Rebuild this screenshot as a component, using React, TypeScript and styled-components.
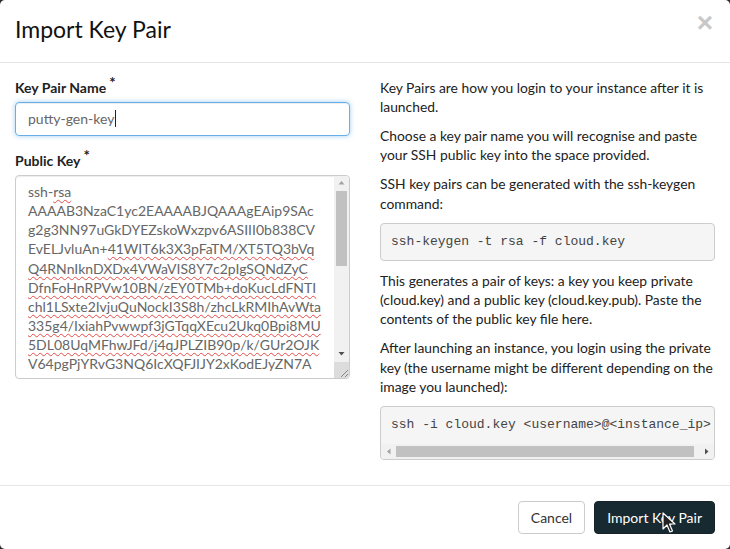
import React from "react";
import styled, { createGlobalStyle } from "styled-components";

const Global = createGlobalStyle`
  html, body { margin: 0; padding: 0; background: #2b2b2b; }
  body { font-family: Lato, "Open Sans", sans-serif; color: #333; }
  * { box-sizing: border-box; }
`;

const Modal = styled.div`
  position: relative;
  width: 730px;
  height: 549px;
  background: #fff;
  border-radius: 5px;
  display: flex;
  flex-direction: column;
  overflow: hidden;
`;

const Header = styled.div`
  display: flex;
  align-items: center;
  justify-content: space-between;
  height: 63px;
  padding: 0 15px 3px 15px;
  border-bottom: 1px solid #e5e5e5;
`;

const Title = styled.h4`
  margin: 0;
  font-size: 23px;
  font-weight: 400;
  color: #111;
  line-height: 1;
`;

const Close = styled.button`
  border: 0;
  background: none;
  padding: 0;
  margin-top: -12px;
  margin-right: 2px;
  font-family: "Liberation Sans", sans-serif;
  font-size: 28px;
  font-weight: 700;
  color: #c8c8c8;
  line-height: 1;
`;

const Body = styled.div`
  flex: 1;
  display: grid;
  grid-template-columns: 335px 335px;
  column-gap: 30px;
  padding: 15px;
  align-items: start;
`;

const Column = styled.div`
  display: flex;
  flex-direction: column;
`;

const Group = styled.div`
  display: flex;
  flex-direction: column;
  margin-bottom: 15px;
`;

const Label = styled.label`
  font-size: 14px;
  font-weight: 700;
  color: #222;
  line-height: 19.2px;
  margin-bottom: 5px;
`;

const Req = styled.span`
  font-size: 15px;
  line-height: 0;
  margin-left: 3px;
  position: relative;
  top: -5px;
`;

const TextInput = styled.div`
  height: 34px;
  border: 1px solid #66afe9;
  border-radius: 4px;
  box-shadow: inset 0 1px 1px rgba(0,0,0,.075), 0 0 5px rgba(102,175,233,.6);
  padding: 0 12px;
  display: flex;
  align-items: center;
  font-size: 14px;
  color: #666;
`;

const Caret = styled.span`
  display: inline-block;
  width: 1px;
  height: 17px;
  background: #222;
  margin-left: 1px;
`;

const KeyArea = styled.div`
  height: 204px;
  border: 1px solid #ccc;
  border-radius: 4px;
  display: flex;
  overflow: hidden;
  box-shadow: inset 0 1px 1px rgba(0,0,0,.075);
`;

const KeyText = styled.div`
  flex: 1;
  padding: 6px 0 0 12px;
  font-size: 14px;
  line-height: 19.15px;
  color: #666;
  overflow: hidden;
`;

const KeyLine = styled.div`
  white-space: nowrap;
`;

const Misspelled = styled.span`
  text-decoration: underline wavy #e34a46;
  text-decoration-thickness: 1px;
  text-underline-offset: 2px;
  text-decoration-skip-ink: none;
`;

const VScroll = styled.div`
  width: 15px;
  display: flex;
  flex-direction: column;
  background: #f1f1f1;
`;

const HScroll = styled.div`
  height: 15px;
  display: flex;
  background: #f1f1f1;
`;

const ScrollButton = styled.div`
  width: 15px;
  height: 15px;
  flex: none;
  display: flex;
  align-items: center;
  justify-content: center;
`;

const VTrack = styled.div`
  flex: 1;
  display: flex;
  flex-direction: column;
  padding: 0 2px;
`;

const HTrack = styled.div`
  flex: 1;
  display: flex;
  align-items: center;
`;

const Thumb = styled.div<{ $vertical?: boolean }>`
  background: #c1c1c1;
  ${(p) => (p.$vertical ? "width: 100%;" : "height: 11px;")}
`;

const Corner = styled.div`
  width: 15px;
  height: 16px;
  flex: none;
  background: #dcdcdc;
  display: flex;
  align-items: flex-end;
  justify-content: flex-end;
`;

const Para = styled.p`
  margin: 0 0 10px;
  font-size: 13.85px;
  line-height: 19.2px;
  color: #222;
`;

const Code = styled.pre`
  margin: 0 0 10px;
  padding: 9px 10px;
  background: #f5f5f5;
  border: 1px solid #ccc;
  border-radius: 4px;
  font-family: "Liberation Mono", monospace;
  font-size: 13px;
  line-height: 18px;
  color: #444;
  overflow: hidden;
  white-space: pre;
`;

const ScrollBox = styled.div`
  margin: 0 0 10px;
  background: #f5f5f5;
  border: 1px solid #ccc;
  border-radius: 4px;
  overflow: hidden;
  display: flex;
  flex-direction: column;
`;

const CodeInner = styled.pre`
  margin: 0;
  padding: 9px 10px 10px;
  font-family: "Liberation Mono", monospace;
  font-size: 13px;
  line-height: 18px;
  color: #444;
  overflow: hidden;
  white-space: pre;
`;

const Footer = styled.div`
  display: flex;
  justify-content: flex-end;
  gap: 9px;
  padding: 15px;
  border-top: 1px solid #e5e5e5;
`;

const Button = styled.button<{ $primary?: boolean }>`
  height: 33px;
  padding: 0 12px;
  border-radius: 4px;
  font-family: Lato, sans-serif;
  font-size: 14px;
  line-height: 1;
  border: 1px solid ${(p) => (p.$primary ? "#162329" : "#ccc")};
  background: ${(p) => (p.$primary ? "#182a31" : "#fff")};
  color: ${(p) => (p.$primary ? "#fff" : "#333")};
`;

const Pointer = styled.svg`
  position: absolute;
  left: 662px;
  top: 512px;
`;

const Arrow = ({ dir, color }: { dir: "up" | "down" | "left" | "right"; color: string }) => {
  const pts = {
    up: "0.5,4.5 3.5,1 6.5,4.5",
    down: "0.5,1 3.5,4.5 6.5,1",
    left: "4.5,0.5 1,3.5 4.5,6.5",
    right: "1,0.5 4.5,3.5 1,6.5",
  }[dir];
  const vertical = dir === "up" || dir === "down";
  return (
    <svg width={vertical ? 7 : 6} height={vertical ? 6 : 7} viewBox={vertical ? "0 0 7 6" : "0 0 6 7"}>
      <polygon points={pts} fill={color} />
    </svg>
  );
};

export default function App() {
  return (
    <>
      <Global />
      <Modal>
        <Header>
          <Title>Import Key Pair</Title>
          <Close aria-label="Close">×</Close>
        </Header>
        <Body>
          <Column>
            <Group>
              <Label>
                Key Pair Name<Req>*</Req>
              </Label>
              <TextInput>
                putty-gen-key
                <Caret />
              </TextInput>
            </Group>
            <Group>
              <Label>
                Public Key<Req>*</Req>
              </Label>
              <KeyArea role="textbox">
                <KeyText>
                  <KeyLine>
                    ssh-<Misspelled>rsa</Misspelled>
                  </KeyLine>
                  <KeyLine>AAAAB3NzaC1yc2EAAAABJQAAAgEAip9SAc</KeyLine>
                  <KeyLine>g2g3NN97uGkDYEZskoWxzpv6ASIII0b838CV</KeyLine>
                  <KeyLine>
                    EvELJvluAn+<Misspelled>41WIT6k3X3pFaTM/XT5TQ3bVq</Misspelled>
                  </KeyLine>
                  <KeyLine>
                    <Misspelled>Q4RNnIknDXDx4VWaVIS8Y7c2pIgSQNdZyC</Misspelled>
                  </KeyLine>
                  <KeyLine>
                    <Misspelled>DfnFoHnRPVw10BN/zEY0TMb+doKucLdFNTI</Misspelled>
                  </KeyLine>
                  <KeyLine>
                    <Misspelled>chl1LSxte2IvjuQuNockI3S8h/zhcLkRMIhAvWta</Misspelled>
                  </KeyLine>
                  <KeyLine>
                    <Misspelled>335g4/IxiahPvwwpf3jGTqqXEcu2Ukq0Bpi8MU</Misspelled>
                  </KeyLine>
                  <KeyLine>
                    <Misspelled>5DL08UqMFhwJFd/j4qJPLZIB90p/k/GUr2OJK</Misspelled>
                  </KeyLine>
                  <KeyLine>V64pgPjYRvG3NQ6IcXQFJIJY2xKodEJyZN7A</KeyLine>
                  <KeyLine>88kVAewkS4AuD0YMpiM84sC6YZ740HeAY</KeyLine>
                </KeyText>
                <VScroll>
                  <ScrollButton>
                    <Arrow dir="up" color="#a3a3a3" />
                  </ScrollButton>
                  <VTrack>
                    <Thumb $vertical style={{ height: 75 }} />
                  </VTrack>
                  <ScrollButton>
                    <Arrow dir="down" color="#505050" />
                  </ScrollButton>
                  <Corner>
                    <svg width="10" height="10" viewBox="0 0 10 10">
                      <line x1="2" y1="9" x2="9" y2="2" stroke="#888" strokeWidth="1" />
                      <line x1="6" y1="9" x2="9" y2="6" stroke="#888" strokeWidth="1" />
                    </svg>
                  </Corner>
                </VScroll>
              </KeyArea>
            </Group>
          </Column>
          <Column>
            <Para>
              Key Pairs are how you login to your instance after it is
              launched.
            </Para>
            <Para>
              Choose a key pair name you will recognise and paste your SSH
              public key into the space provided.
            </Para>
            <Para>
              SSH key pairs can be generated with the ssh-keygen command:
            </Para>
            <Code>ssh-keygen -t rsa -f cloud.key</Code>
            <Para>
              This generates a pair of keys: a key you keep private
              (cloud.key) and a public key (cloud.key.pub). Paste the contents
              of the public key file here.
            </Para>
            <Para>
              After launching an instance, you login using the private key
              (the username might be different depending on the image you
              launched):
            </Para>
            <ScrollBox>
              <CodeInner>ssh -i cloud.key &lt;username&gt;@&lt;instance_ip&gt;</CodeInner>
              <HScroll>
                <ScrollButton>
                  <Arrow dir="left" color="#a3a3a3" />
                </ScrollButton>
                <HTrack>
                  <Thumb style={{ width: 298 }} />
                </HTrack>
                <ScrollButton>
                  <Arrow dir="right" color="#505050" />
                </ScrollButton>
              </HScroll>
            </ScrollBox>
          </Column>
        </Body>
        <Footer>
          <Button>Cancel</Button>
          <Button $primary>Import Key Pair</Button>
        </Footer>
        <Pointer width="14" height="22" viewBox="0 0 14 22">
          <path
            d="M1 1 L1 17 L5 13 L8 20 L10.5 19 L7.5 12 L13 12 Z"
            fill="#222"
            stroke="#fff"
            strokeWidth="1.2"
            strokeLinejoin="round"
          />
        </Pointer>
      </Modal>
    </>
  );
}
